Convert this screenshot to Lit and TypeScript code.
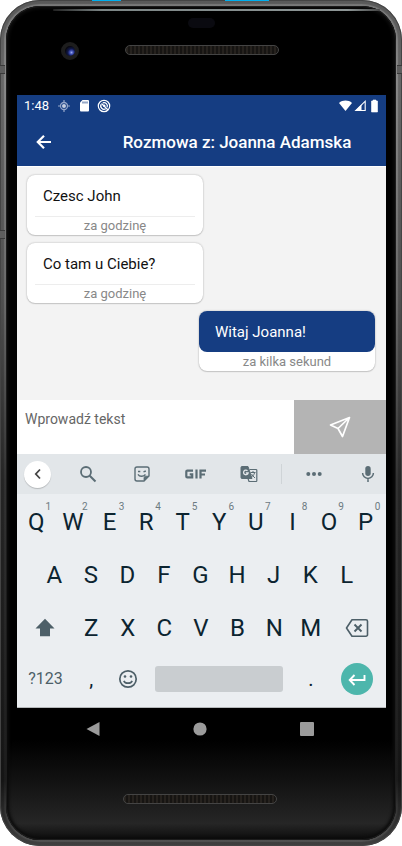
import { LitElement, html, css } from "lit";
import { customElement, property } from "lit/decorators.js";

interface Message {
  text: string;
  time: string;
  own: boolean;
}

@customElement("status-bar")
class StatusBar extends LitElement {
  static styles = css`
    :host {
      display: flex;
      align-items: center;
      height: 22px;
      padding: 0 6px 0 7px;
      background: #153d82;
      color: #fff;
      font-size: 13px;
      line-height: 16px;
    }
    .icons {
      display: flex;
      align-items: center;
      gap: 6px;
      margin-left: 8px;
      flex: 1;
    }
    .right {
      display: flex;
      align-items: center;
      gap: 2px;
    }
    svg {
      display: block;
    }
  `;
  render() {
    return html`
      <span>1:48</span>
      <span class="icons">
        <svg width="14" height="14" viewBox="0 0 14 14" fill="none" stroke="#93a5c8">
          <circle cx="7" cy="7" r="3.500" stroke-width="1.300" />
          <circle cx="7" cy="7" r="2" fill="#c3cde0" stroke="none" />
          <path d="M7 1v3M7 10v3M1 7h3M10 7h3" stroke-width="1.200" />
        </svg>
        <svg width="14" height="14" viewBox="0 0 14 14" fill="#fff">
          <path d="M5.500 1H11a1 1 0 0 1 1 1v9.500a1 1 0 0 1-1 1H4a1 1 0 0 1-1-1V3.500z" />
          <path d="M6 2.500v2M8 2.500v2M10 2.500v2" stroke="#153d82" stroke-width=".9" />
        </svg>
        <svg width="14" height="14" viewBox="0 0 14 14" fill="none" stroke="#fff">
          <circle cx="7" cy="7" r="5.700" stroke-width="1.200" />
          <path d="M4.200 5.300a3.300 3.300 0 0 0 4.500 4.500M5.800 3.900a3.300 3.300 0 0 1 4.300 4.300" stroke-width="1.300" />
          <path d="M4.500 4.500 11 11" stroke-width="1.300" />
          <circle cx="7.200" cy="6.800" r="1.300" fill="#fff" stroke="none" />
        </svg>
      </span>
      <span class="right">
        <svg width="13" height="14" viewBox="0 0 13 14" fill="#fff">
          <path d="M0 4C3.600.8 9.400.8 13 4L6.500 12z" />
        </svg>
        <svg width="13" height="14" viewBox="0 0 13 14">
          <path d="M11.200 2.200v9.300H1.800z" fill="none" stroke="#fff" stroke-width="1.100" />
          <path d="M7.500 5.500v6H1.500z" fill="#fff" />
        </svg>
        <svg width="11" height="14" viewBox="0 0 11 14" fill="#fff">
          <path d="M4 1h3v1h1.500v11h-6V2H4z" stroke="#fff" stroke-width=".6" stroke-linejoin="round" />
        </svg>
      </span>
    `;
  }
}

@customElement("chat-message")
class ChatMessage extends LitElement {
  @property({ type: Boolean, reflect: true }) own = false;
  @property() text = "";
  @property() time = "";

  static styles = css`
    :host {
      display: block;
      box-sizing: border-box;
      align-self: flex-start;
      min-width: 176px;
      max-width: 85%;
      border-radius: 8px;
      background: #fff;
      box-shadow: 0 0 2px rgba(0, 0, 0, 0.3), 0 1px 1px rgba(0, 0, 0, 0.12);
      color: #111;
    }
    :host([own]) {
      align-self: flex-end;
    }
    .text {
      padding: 12px 16px 10px;
      font-size: 15px;
      line-height: 19px;
    }
    .time {
      margin: 0 8px;
      border-top: 1px solid #ededed;
      font-size: 13px;
      line-height: 18px;
      text-align: center;
      color: #888;
    }
    :host([own]) .text {
      border-radius: 8px;
      background: #153d82;
      color: #fff;
    }
    :host([own]) .time {
      border-top-color: #fff;
    }
  `;
  render() {
    return html`
      <div class="text">${this.text}</div>
      <div class="time">${this.time}</div>
    `;
  }
}

@customElement("soft-keyboard")
class SoftKeyboard extends LitElement {
  static styles = css`
    :host {
      display: block;
      background: #ebeef1;
      color: #0c2430;
      border-bottom: 1px solid #b5b8ba;
    }
    button {
      display: flex;
      align-items: center;
      justify-content: center;
      position: relative;
      padding: 0;
      border: 0;
      background: none;
      color: inherit;
      font: inherit;
    }
    svg {
      display: block;
    }
    .tools {
      display: grid;
      grid-template-columns: 37px repeat(4, 54fr) 10fr 56fr 38fr;
      align-items: center;
      justify-items: center;
      height: 40px;
      padding: 0 6px 0 7px;
      background: #e2e6e9;
      color: #5b6d75;
    }
    .tools button {
      width: 24px;
      height: 27px;
    }
    .tools .collapse {
      justify-self: start;
      width: 27px;
      border-radius: 50%;
      background: #fff;
      box-shadow: 0 1px 1px rgba(0, 0, 0, 0.2);
      color: #444;
    }
    .tools .mic {
      justify-self: end;
    }
    .sep {
      width: 1px;
      height: 20px;
      background: #cfd4d7;
    }
    .keys {
      padding: 1px 2px 4px 1px;
    }
    .row {
      display: grid;
      height: 53px;
      font-size: 24px;
    }
    .top {
      grid-template-columns: repeat(10, 1fr);
    }
    .home {
      grid-template-columns: repeat(9, 1fr);
      padding: 0 19px 0 18px;
    }
    .lower {
      grid-template-columns: 3fr repeat(7, 2fr) 3fr;
    }
    .bottom {
      grid-template-columns: 3fr 2fr 2fr 8fr 2fr 3fr;
      height: 49px;
    }
    .hint {
      position: absolute;
      top: 6px;
      left: 75%;
      font-size: 10px;
      line-height: 12px;
      color: #6c7a81;
    }
    .grey {
      color: #4d5f68;
    }
    .mode {
      font-size: 16px;
    }
    .punct {
      font-size: 20px;
    }
    .space::before {
      content: "";
      flex: 1;
      height: 26px;
      margin: 0 9px;
      border-radius: 3px;
      background: #c9cdd0;
    }
    .enter span {
      display: grid;
      place-items: center;
      width: 32px;
      height: 32px;
      border-radius: 50%;
      background: #4db6ac;
    }
  `;

  private letters(keys: string) {
    return [...keys].map((k) => html`<button>${k}</button>`);
  }

  render() {
    return html`
      <div class="tools">
        <button class="collapse" aria-label="Zwiń">
          <svg width="14" height="14" viewBox="0 0 14 14" fill="none" stroke="currentColor" stroke-width="1.800">
            <path d="M9 2.500 4.800 7 9 11.500" />
          </svg>
        </button>
        <button aria-label="Szukaj">
          <svg width="18" height="18" viewBox="0 0 18 18" fill="none" stroke="currentColor" stroke-width="1.800">
            <circle cx="7" cy="7" r="5" />
            <path d="M10.700 10.700 16.500 16.500" stroke-width="2" />
          </svg>
        </button>
        <button aria-label="Naklejki">
          <svg width="18" height="18" viewBox="0 0 18 18" fill="none" stroke="currentColor" stroke-width="1.400">
            <path d="M11 16H4a2 2 0 0 1-2-2V4a2 2 0 0 1 2-2h10a2 2 0 0 1 2 2v7z" />
            <path d="M11 15.500V13a1.800 1.800 0 0 1 1.800-1.800H15.500z" fill="currentColor" stroke-width=".8" />
            <path d="M5 9.300c1.500 2.400 5 2.800 7.500.2" />
            <path d="M5 6.500h2.300M10.500 6.900l2.300-.9" />
          </svg>
        </button>
        <button aria-label="GIF">
          <svg width="24" height="14" viewBox="0 0 24 14" fill="none" stroke="currentColor" stroke-width="2.200">
            <path d="M9 3.600H3.300a1 1 0 0 0-1 1v4.800a1 1 0 0 0 1 1H8.200V7.400H5.700M12.500 2.500v9M16.500 11.500V3.600H22M16.500 7.500h4.500" />
          </svg>
        </button>
        <button aria-label="Tłumacz">
          <svg width="18" height="18" viewBox="0 0 18 18" fill="none" stroke="currentColor">
            <path d="M2 1.500h6l4 12H2a1 1 0 0 1-1-1v-10a1 1 0 0 1 1-1z" fill="currentColor" />
            <path d="M9.500 4.500H16a.8.8 0 0 1 .8.8v10.400a.8.8 0 0 1-.8.8H9l-1-3" stroke-width="1.200" />
            <path d="M10.500 7.500h5M13 6v1.500M14.500 8c-.5 2-2 3.500-3 4M11.500 9c.8 1.500 2 2.500 3.500 4" />
            <path d="M7.500 5.800a2.300 2.300 0 1 0 .6 2.200H5.800" stroke="#e2e6e9" stroke-width="1.300" />
          </svg>
        </button>
        <span class="sep"></span>
        <button aria-label="Więcej">
          <svg width="18" height="18" viewBox="0 0 18 18" fill="currentColor">
            <circle cx="3.300" cy="9" r="2" /><circle cx="9" cy="9" r="2" /><circle cx="14.700" cy="9" r="2" />
          </svg>
        </button>
        <button class="mic" aria-label="Mikrofon">
          <svg width="18" height="18" viewBox="0 0 18 18">
            <rect x="6.300" y="1" width="5.400" height="10" rx="2.700" fill="currentColor" />
            <path d="M3.600 8a5.400 5.400 0 0 0 10.800 0M9 13.500V17" fill="none" stroke="currentColor" stroke-width="1.500" />
          </svg>
        </button>
      </div>
      <div class="keys">
        <div class="row top">
          ${[..."QWERTYUIOP"].map(
            (k, i) => html`<button>${k}<span class="hint">${(i + 1) % 10}</span></button>`
          )}
        </div>
        <div class="row home">${this.letters("ASDFGHJKL")}</div>
        <div class="row lower">
          <button class="grey" aria-label="Shift">
            <svg width="20" height="20" viewBox="0 0 20 20" fill="currentColor">
              <path d="M10 .8 19.500 10.500H15V18.300H5V10.500H.5z" />
            </svg>
          </button>
          ${this.letters("ZXCVBNM")}
          <button class="grey" aria-label="Usuń">
            <svg width="24" height="20" viewBox="0 0 24 20" fill="none" stroke="currentColor" stroke-width="1.600">
              <path d="M7 1.800h14a1.500 1.500 0 0 1 1.500 1.500v13.400a1.500 1.500 0 0 1-1.500 1.500H7L1.500 10z" stroke-linejoin="round" />
              <path d="m9.500 6.500 7 7M16.500 6.500l-7 7" stroke-width="1.900" />
            </svg>
          </button>
        </div>
        <div class="row bottom">
          <button class="grey mode">?123</button>
          <button class="punct">,</button>
          <button class="grey" aria-label="Emoji">
            <svg width="20" height="20" viewBox="0 0 20 20" fill="none" stroke="currentColor" stroke-width="1.700">
              <circle cx="10" cy="10" r="8.200" />
              <path d="M5.800 11.800c1.500 3.200 6.900 3.200 8.400 0" />
              <circle cx="7" cy="7.500" r="1.300" fill="currentColor" stroke="none" />
              <circle cx="13" cy="7.500" r="1.300" fill="currentColor" stroke="none" />
            </svg>
          </button>
          <button class="space" aria-label="Spacja"></button>
          <button class="punct">.</button>
          <button class="enter" aria-label="Enter">
            <span>
              <svg width="20" height="18" viewBox="0 0 20 18" fill="none" stroke="#fff" stroke-width="1.900">
                <path d="M17.500 5v5H3M7.500 5 2.700 10l4.800 5" />
              </svg>
            </span>
          </button>
        </div>
      </div>
    `;
  }
}

@customElement("app-root")
class AppRoot extends LitElement {
  private messages: Message[] = [
    { text: "Czesc John", time: "za godzinę", own: false },
    { text: "Co tam u Ciebie?", time: "za godzinę", own: false },
    { text: "Witaj Joanna!", time: "za kilka sekund", own: true },
  ];

  static styles = css`
    :host {
      display: block;
      background: #fff;
      font-family: Roboto, "Liberation Sans", sans-serif;
    }
    button {
      padding: 0;
      border: 0;
      background: none;
      color: inherit;
    }
    svg {
      display: block;
    }
    .phone {
      box-sizing: border-box;
      display: flex;
      flex-direction: column;
      min-height: 100vh;
      padding: 6px;
      border-radius: 40px;
      position: relative;
      background: linear-gradient(#777 0, #8a8a8a 80px, #6a6a6a 300px, #333 480px, #1c1c1c 780px, #555 846px);
      box-shadow: inset 0 0 0 1px #444, inset 0 0 1px 4px rgba(0, 0, 0, 0.25);
    }
    .accent {
      position: absolute;
      top: 0;
      height: 1px;
      background: #00b0f0;
    }
    .accent.one {
      left: 23%;
      width: 7%;
    }
    .accent.two {
      left: 56%;
      width: 11%;
    }
    .band {
      position: absolute;
      width: 5px;
      height: 7px;
      border: solid #3a3a3a;
      border-width: 1px 0;
      background: #5e5e5e;
    }
    .band.left {
      left: 0;
      top: 230px;
    }
    .band.upper {
      left: 0;
      top: 65px;
    }
    .band.right {
      right: 0;
      top: 65px;
    }
    .glass {
      flex: 1;
      display: flex;
      flex-direction: column;
      padding: 0 10px 0 11px;
      border-radius: 34px;
      background: linear-gradient(#000 0, #000 88%, #161616 94%, #262626 98%, #0c0c0c 100%);
      box-shadow: inset 0 0 0 1px #1c1c1c, inset 0 0 3px 3px #0c0c0c;
    }
    .forehead {
      display: grid;
      grid-template-columns: 1fr 154px 1fr;
      grid-template-rows: 12px 8px 1fr;
      justify-items: center;
      height: 89px;
    }
    .shine {
      grid-column: 1 / 4;
      grid-row: 1;
      align-self: start;
      justify-self: stretch;
      height: 2px;
      margin: 3px 6px 0 36px;
      border-radius: 2px;
      background: linear-gradient(90deg, #222, #7c8585 15%, #8e9696 90%, #444);
    }
    .sensor {
      grid-column: 2;
      grid-row: 2;
      width: 27px;
      height: 10px;
      border-radius: 5px;
      background: #0a0a10;
    }
    .camera {
      grid-column: 1;
      grid-row: 3;
      box-sizing: border-box;
      width: 18px;
      height: 18px;
      margin-top: 16px;
      margin-right: 2px;
      border: 4px solid #1d1d1d;
      border-radius: 50%;
      background: radial-gradient(circle at 65% 65%, #9aa8f0 0, #3a4ab0 20%, #10184a 40%, #080810 70%);
    }
    .speaker {
      box-sizing: border-box;
      width: 154px;
      height: 10px;
      border: 1px solid #444;
      border-radius: 5px;
      background: repeating-linear-gradient(90deg, #26221e 0, #26221e 2px, #161412 2px, #161412 4px);
    }
    .forehead .speaker {
      grid-column: 2;
      grid-row: 3;
      margin-top: 19px;
    }
    .bar {
      display: flex;
      align-items: center;
      height: 49px;
      padding: 0 18px 0 17px;
      background: #153d82;
      color: #fff;
    }
    h1 {
      flex: 1;
      margin: 0;
      text-align: center;
      padding-left: 52px;
      font-size: 17px;
      line-height: 24px;
      font-weight: 500;
      white-space: nowrap;
    }
    .chat {
      box-sizing: border-box;
      display: flex;
      flex-direction: column;
      gap: 8px;
      min-height: 234px;
      padding: 8px 11px 8px 10px;
      border-top: 1px solid #fff;
      background: #f3f3f3;
    }
    .compose {
      display: grid;
      grid-template-columns: 3fr 1fr;
      height: 54px;
    }
    input {
      min-width: 0;
      padding: 0 9px 16px 8px;
      border: 0;
      outline: 0;
      background: #fff;
      color: #111;
      font: 14px/20px Roboto, "Liberation Sans", sans-serif;
    }
    input::placeholder {
      color: #666;
    }
    .send {
      display: grid;
      place-items: center;
      background: #b4b4b4;
      color: #fff;
    }
    nav {
      display: flex;
      justify-content: space-around;
      align-items: center;
      height: 42px;
      padding: 0 26px 0 22px;
      color: #9b9b9b;
    }
    .chin {
      flex: 1;
      display: flex;
      justify-content: center;
      padding: 44px 4px 0 0;
    }
  `;

  render() {
    return html`
      <div class="phone">
        <span class="accent one"></span>
        <span class="accent two"></span>
        <span class="band upper"></span>
        <span class="band left"></span>
        <span class="band right"></span>
        <div class="glass">
          <div class="forehead">
            <span class="shine"></span>
            <span class="sensor"></span>
            <span class="camera"></span>
            <span class="speaker"></span>
          </div>
          <status-bar></status-bar>
          <header class="bar">
            <button aria-label="Wstecz">
              <svg width="20" height="20" viewBox="0 0 20 20" fill="none" stroke="#fff" stroke-width="2.200">
                <path d="M17 10H4M10 3.800 3.800 10l6.200 6.200" />
              </svg>
            </button>
            <h1>Rozmowa z: Joanna Adamska</h1>
          </header>
          <main class="chat">
            ${this.messages.map(
              (m) => html`<chat-message .text=${m.text} .time=${m.time} ?own=${m.own}></chat-message>`
            )}
          </main>
          <form class="compose">
            <input type="text" placeholder="Wprowadź tekst" aria-label="Wprowadź tekst" />
            <button class="send" type="button" aria-label="Wyślij">
              <svg width="22" height="22" viewBox="0 0 22 22" fill="none" stroke="#fff" stroke-width="1.700" stroke-linejoin="round">
                <path d="M20.500 1.500 1.500 9l7.500 3.500 4.500 8zM20.500 1.500 9 12.500" />
              </svg>
            </button>
          </form>
          <soft-keyboard></soft-keyboard>
          <nav>
            <button aria-label="Wstecz">
              <svg width="16" height="16" viewBox="0 0 16 16" fill="currentColor">
                <path d="M14.500 1v14L1.500 8z" />
              </svg>
            </button>
            <button aria-label="Ekran główny">
              <svg width="16" height="16" viewBox="0 0 16 16" fill="currentColor"><circle cx="8" cy="8" r="6.600" /></svg>
            </button>
            <button aria-label="Ostatnie">
              <svg width="16" height="16" viewBox="0 0 16 16" fill="currentColor">
                <rect x="1" y="1" width="14" height="14" rx="1" />
              </svg>
            </button>
          </nav>
          <div class="chin"><span class="speaker"></span></div>
        </div>
      </div>
    `;
  }
}
